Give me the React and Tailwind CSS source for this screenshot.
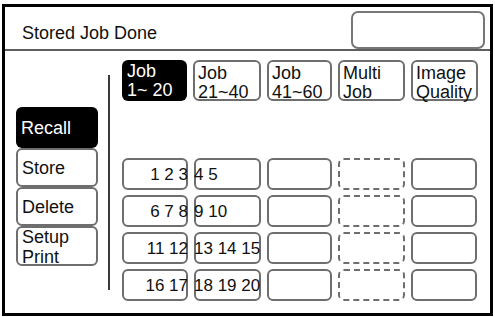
import React from "react";

const tabs = [
  { top: "Job", bottom: "1~ 20", active: true, w: "w-[65px]" },
  { top: "Job", bottom: "21~40", w: "w-[68px]" },
  { top: "Job", bottom: "41~60", w: "w-[65px]" },
  { top: "Multi", bottom: "Job", w: "w-[67px]" },
  { top: "Image", bottom: "Quality", w: "w-[67px]" },
];

const rows = [
  ["1 2 3", "4 5"],
  ["6 7 8", "9 10"],
  ["11 12", "13 14 15"],
  ["16 17", "18 19 20"],
];

const sideButtons = ["Store", "Delete"];

const cell = "h-[32px] border-2 border-[#6e6e6e] rounded-[6px]";

const App = () => {
  return (
    <div
      className="w-[495px] h-[317px] bg-white text-[#111]"
      style={{ fontFamily: '"Liberation Sans", Arial, sans-serif' }}
    >
      <div className="ml-[2px] pt-[4px]">
        <div className="w-[491px] h-[312px] border-[3px] border-black flex flex-col">
          {/* header */}
          <div className="h-[44px] flex items-start justify-between border-b-2 border-[#5e5e5e] shrink-0">
            <span className="pl-[17px] pt-[16px] text-[18px] leading-[20px]">Stored Job Done</span>
            <div className="mt-[4px] mr-[5px] w-[134px] h-[38px] border-2 border-[#777] rounded-[7px]" />
          </div>

          {/* body */}
          <div className="flex flex-1">
            {/* left buttons */}
            <div className="pl-[11px] pt-[56px] w-[82px] box-content flex flex-col">
              <div className="h-[41px] bg-black rounded-[6px] text-white text-[18px] leading-[20px] pl-[5px] flex items-center">
                Recall
              </div>
              {sideButtons.map((b) => (
                <div
                  key={b}
                  className="h-[39px] border-2 border-[#6e6e6e] rounded-[6px] text-[18px] leading-[20px] pl-[4px] flex items-center"
                >
                  {b}
                </div>
              ))}
              <div className="h-[40px] border-2 border-[#6e6e6e] rounded-[6px] text-[18px] leading-[20px] pl-[4px] flex flex-col">
                <span className="-mt-[1px]">Setup</span>
                <span>Print</span>
              </div>
            </div>

            {/* divider */}
            <div className="ml-[10px] mt-[24px] w-[2px] h-[215px] bg-[#3a3a3a]" />

            {/* right area */}
            <div className="ml-[12px] pt-[9px] flex flex-col">
              <div className="flex gap-[6px]">
                {tabs.map((t, i) => (
                  <div
                    key={i}
                    className={
                      t.w +
                      " h-[41px] rounded-[6px] text-[18px] leading-[19px] pt-[2px] flex flex-col whitespace-nowrap " +
                      (t.active ? "bg-black text-white pl-[5px]" : "border-2 border-[#6e6e6e] pl-[3px]")
                    }
                  >
                    <span>{t.top}</span>
                    <span>{t.bottom}</span>
                  </div>
                ))}
              </div>

              <div className="mt-[57px] grid grid-cols-[66px_67px_65px_67px_66px] gap-x-[6px] gap-y-[5px]">
                {rows.map(([a, b], i) => (
                  <React.Fragment key={i}>
                    <div className={cell + " flex items-center justify-end text-[17px] whitespace-nowrap"}>
                      <span className="leading-none -mr-[2px]">{a}</span>
                    </div>
                    <div className={cell + " flex items-center justify-start text-[17px] whitespace-nowrap"}>
                      <span className="leading-none -ml-[2px]">{b}</span>
                    </div>
                    <div className={cell} />
                    <div className="h-[32px] border-2 border-dashed border-[#6e6e6e] rounded-[6px]" />
                    <div className={cell} />
                  </React.Fragment>
                ))}
              </div>
            </div>
          </div>
        </div>
      </div>
    </div>
  );
};

export default App;
